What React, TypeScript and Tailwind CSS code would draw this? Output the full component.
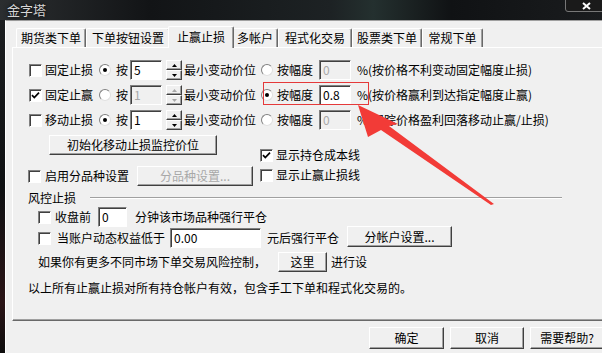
import React from 'react';

const btn3d =
  'border border-t-white border-l-white border-b-[#404040] border-r-[#404040] shadow-[inset_-1px_-1px_0_#a0a0a0] bg-[#f0f0f0]';
const sunken =
  'border border-t-[#808080] border-l-[#808080] border-b-white border-r-white shadow-[inset_1px_1px_0_#404040]';

function Check({ checked }: { checked?: boolean }) {
  return (
    <span className={`w-[13px] h-[13px] shrink-0 bg-white flex items-center justify-center ${sunken}`}>
      {checked && (
        <svg width="9" height="9" viewBox="0 0 9 9">
          <path d="M1 4.2 L3.3 6.6 L8 1.6" stroke="#000" strokeWidth="1.7" fill="none" />
        </svg>
      )}
    </span>
  );
}

function Radio({ on }: { on?: boolean }) {
  return (
    <span className="w-[12px] h-[12px] shrink-0 rounded-full bg-white border border-t-[#808080] border-l-[#808080] border-b-[#e0e0e0] border-r-[#e0e0e0] flex items-center justify-center">
      {on && <span className="w-[4px] h-[4px] rounded-full bg-black" />}
    </span>
  );
}

function Field({ w, value, disabled }: { w: string; value: string; disabled?: boolean }) {
  return (
    <span
      className={`${w} h-[20px] shrink-0 flex items-center pl-[3px] ${sunken} ${
        disabled ? 'bg-[#f0f0f0] text-[#a8a8a8]' : 'bg-white text-black'
      }`}
    >
      {value}
    </span>
  );
}

function Spin({ disabled }: { disabled?: boolean }) {
  const c = disabled ? '#a8a8a8' : '#000';
  return (
    <span className="ml-[4px] w-[16px] h-[20px] shrink-0 flex flex-col">
      <span className={`h-[10px] flex items-center justify-center ${btn3d}`}>
        <svg width="5" height="3" viewBox="0 0 5 3"><path d="M2.5 0 L5 3 L0 3 Z" fill={c} /></svg>
      </span>
      <span className={`h-[10px] flex items-center justify-center ${btn3d}`}>
        <svg width="5" height="3" viewBox="0 0 5 3"><path d="M0 0 L5 0 L2.5 3 Z" fill={c} /></svg>
      </span>
    </span>
  );
}

function Tab({ label, w }: { label: string; w: string }) {
  return (
    <div
      className={`${w} h-[19px] shrink-0 flex items-center justify-center border-t border-l border-t-white border-l-white border-r border-r-[#696969] rounded-t-[2px] shadow-[inset_-1px_0_0_#a0a0a0]`}
    >
      {label}
    </div>
  );
}

function StopRow({
  checked,
  label,
  byTick,
  tick,
  tickDisabled,
  pct,
  pctDisabled,
  note,
}: {
  checked?: boolean;
  label: string;
  byTick: boolean;
  tick: string;
  tickDisabled?: boolean;
  pct: string;
  pctDisabled?: boolean;
  note: string;
}) {
  return (
    <div className="flex items-center h-[20px] pl-[16px] whitespace-nowrap">
      <Check checked={checked} />
      <span className="ml-[3px] w-[54px] shrink-0">{label}</span>
      <Radio on={byTick} />
      <span className="ml-[5px] w-[14px] shrink-0">按</span>
      <Field w="w-[32px]" value={tick} disabled={tickDisabled} />
      <Spin disabled={tickDisabled} />
      <span className="ml-[2px] w-[77px] shrink-0">最小变动价位</span>
      <Radio on={!byTick} />
      <span className="ml-[4px] w-[42px] shrink-0">按幅度</span>
      <Field w="w-[32px]" value={pct} disabled={pctDisabled} />
      <span className="ml-[6px] w-[11px] shrink-0">%</span>
      <span>{note}</span>
    </div>
  );
}

export default function App() {
  const tabs: [string, string][] = [
    ['期货类下单', 'w-[70px]'],
    ['下单按钮设置', 'w-[84px]'],
  ];
  const tabs2: [string, string][] = [
    ['多帐户', 'w-[46px]'],
    ['程式化交易', 'w-[74px]'],
    ['股票类下单', 'w-[70px]'],
    ['常规下单', 'w-[61px]'],
  ];

  return (
    <div className="relative w-[602px] h-[353px] overflow-hidden bg-[#f0f0f0] text-black text-[12px] leading-[14px] font-['Noto_Sans_CJK_SC',sans-serif]">
      {/* title bar */}
      <div className="relative h-[20px] flex items-center pl-[7px] bg-[linear-gradient(90deg,#2b2e30_0%,#121416_25%,#1d2224_55%,#24302f_62%,#101214_75%,#1a1c1e_100%)]">
        <span className="text-[13px] text-[#d6d6d6] [text-shadow:0_0_4px_#000]">金字塔</span>
        <div className="absolute top-[-1px] right-[-6px] w-[43px] h-[13px] border border-[#777] rounded-b-[3px] bg-[#1a1a1a] flex items-center justify-center">
          <svg width="9" height="8" viewBox="0 0 9 8">
            <path d="M1 1 L8 7 M8 1 L1 7" stroke="#fff" strokeWidth="2" />
          </svg>
        </div>
      </div>

      <div className="flex h-[333px]">
        <div className="w-[5px] shrink-0 bg-[linear-gradient(180deg,#1c1e20,#0e1012_50%,#2a1416_85%,#0d0d0d)]" />
        <div className="flex-1 border-l border-l-white border-t border-t-[#a0a0a0]">
          {/* tabs */}
          <div className="mt-[5px] h-[21px] flex items-end pl-[10px] whitespace-nowrap">
            {tabs.map(([l, w]) => (
              <Tab key={l} label={l} w={w} />
            ))}
            <div className="relative z-10 w-[66px] -mx-[2px] h-[22px] -mb-[1px] shrink-0 flex items-center justify-center pb-[1px] bg-[#f0f0f0] border-t border-l border-t-white border-l-white border-r border-r-[#696969] rounded-t-[2px] shadow-[inset_-1px_0_0_#a0a0a0]">
              止赢止损
            </div>
            {tabs2.map(([l, w]) => (
              <Tab key={l} label={l} w={w} />
            ))}
          </div>

          {/* panel */}
          <div className="ml-[6px] h-[274px] border-t border-t-white border-l border-l-white border-b border-b-[#696969] shadow-[inset_0_-1px_0_#a0a0a0] pt-[12px]">
            <StopRow label="固定止损" byTick tick="5" pct="0" pctDisabled note="(按价格不利变动固定幅度止损)" />
            <div className="mt-[5px]">
              <StopRow
                checked
                label="固定止赢"
                byTick={false}
                tick="1"
                tickDisabled
                pct="0.8"
                note="(按价格赢利到达指定幅度止赢)"
              />
            </div>
            <div className="mt-[5px]">
              <StopRow label="移动止损" byTick tick="1" pct="0" pctDisabled note="(跟踪价格盈利回落移动止赢/止损)" />
            </div>

            <div className="flex whitespace-nowrap">
              <div className="w-[247px] shrink-0">
                <div className={`mt-[5px] ml-[36px] w-[168px] h-[20px] flex items-center justify-center ${btn3d}`}>
                  初始化移动止损监控价位
                </div>
                <div className="mt-[11px] h-[20px] flex items-center pl-[15px]">
                  <Check />
                  <span className="ml-[4px] w-[92px] shrink-0">启用分品种设置</span>
                  <span className={`w-[116px] h-[20px] flex items-center justify-center text-[#a8a8a8] ${btn3d}`}>
                    分品种设置...
                  </span>
                </div>
              </div>
              <div className="pt-[15px]">
                <div className="h-[20px] flex items-center">
                  <Check checked />
                  <span className="ml-[3px]">显示持仓成本线</span>
                </div>
                <div className="h-[20px] flex items-center">
                  <Check />
                  <span className="ml-[3px]">显示止赢止损线</span>
                </div>
              </div>
            </div>

            <div className="mt-[5px] h-[14px] flex items-center pl-[15px]">
              <span className="w-[48px] shrink-0">风控止损</span>
              <span className="ml-[14px] w-[472px] h-[2px] border-t border-t-[#a0a0a0] border-b border-b-white" />
            </div>

            <div className="mt-[2px] h-[20px] flex items-center pl-[25px] whitespace-nowrap">
              <Check />
              <span className="ml-[4px] w-[43px] shrink-0">收盘前</span>
              <Field w="w-[29px]" value="0" />
              <span className="ml-[8px]">分钟该市场品种强行平仓</span>
            </div>

            <div className="mt-[1px] h-[20px] flex items-center pl-[25px] whitespace-nowrap">
              <Check />
              <span className="ml-[6px] w-[113px] shrink-0">当账户动态权益低于</span>
              <Field w="w-[91px]" value="0.00" />
              <span className="ml-[6px] w-[80px] shrink-0">元后强行平仓</span>
              <span className={`w-[105px] h-[21px] -mt-[3px] flex items-center justify-center ${btn3d}`}>分帐户设置...</span>
            </div>

            <div className="mt-[4px] h-[20px] flex items-center pl-[25px] whitespace-nowrap">
              <span className="w-[240px] shrink-0">如果你有更多不同市场下单交易风险控制，</span>
              <span className={`w-[49px] h-[20px] flex items-center justify-center ${btn3d}`}>这里</span>
              <span className="ml-[4px]">进行设</span>
            </div>

            <div className="mt-[9px] h-[14px] flex items-center pl-[15px] whitespace-nowrap">
              以上所有止赢止损对所有持仓帐户有效，包含手工下单和程式化交易的。
            </div>
          </div>

          {/* dialog buttons */}
          <div className="mt-[6px] flex pl-[363px] gap-[6px] whitespace-nowrap">
            <span className={`w-[75px] h-[22px] shrink-0 flex items-center justify-center ${btn3d}`}>确定</span>
            <span className={`w-[74px] h-[22px] shrink-0 flex items-center justify-center ${btn3d}`}>取消</span>
            <span className={`w-[74px] h-[22px] shrink-0 flex items-center justify-center ${btn3d}`}>需要帮助?</span>
          </div>
        </div>
      </div>

      {/* annotation: red box + arrow */}
      <div className="absolute left-[263px] top-[82px] w-[106px] h-[23px] border border-[#e5393a] pointer-events-none" />
      <svg className="absolute left-0 top-0 pointer-events-none" width="602" height="353" viewBox="0 0 602 353">
        <polygon
          points="358,105 398,124 389,126 494,204 491,205 381,130 368,137"
          fill="#f23b37"
        />
      </svg>
    </div>
  );
}
